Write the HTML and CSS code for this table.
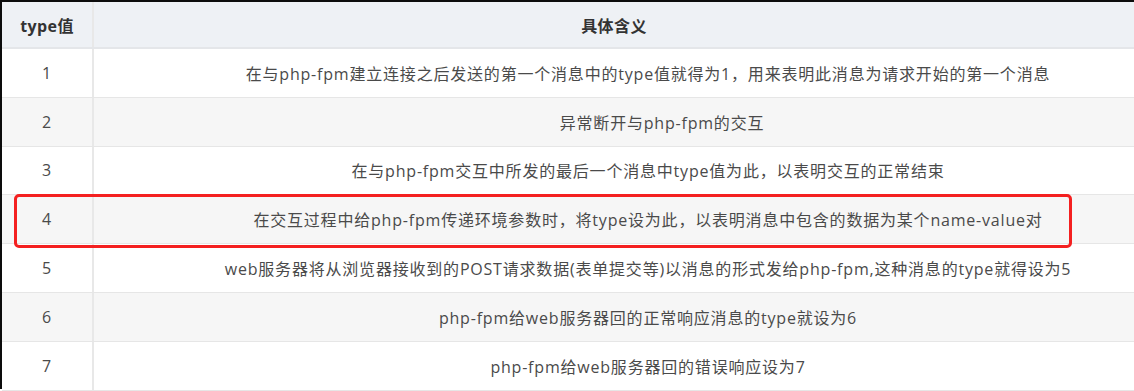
FILE: index.html
```html
<!DOCTYPE html>
<html lang="zh-CN">
<head>
<meta charset="utf-8">
<link rel="stylesheet" href="styles.css">
</head>
<body>
<div class="frame">
  <div class="table">
    <div class="row head">
      <div class="c1">type值</div>
      <div class="c2">具体含义</div>
    </div>
    <div class="row">
      <div class="c1">1</div>
      <div class="c2 off">在与php-fpm建立连接之后发送的第一个消息中的type值就得为1，用来表明此消息为请求开始的第一个消息</div>
    </div>
    <div class="row alt">
      <div class="c1">2</div>
      <div class="c2 off2">异常断开与php-fpm的交互</div>
    </div>
    <div class="row">
      <div class="c1">3</div>
      <div class="c2 off">在与php-fpm交互中所发的最后一个消息中type值为此，以表明交互的正常结束</div>
    </div>
    <div class="row alt">
      <div class="c1">4</div>
      <div class="c2 off">在交互过程中给php-fpm传递环境参数时，将type设为此，以表明消息中包含的数据为某个name-value对</div>
    </div>
    <div class="row">
      <div class="c1">5</div>
      <div class="c2 off">web服务器将从浏览器接收到的POST请求数据(表单提交等)以消息的形式发给php-fpm,这种消息的type就得设为5</div>
    </div>
    <div class="row alt">
      <div class="c1">6</div>
      <div class="c2 off">php-fpm给web服务器回的正常响应消息的type就设为6</div>
    </div>
    <div class="row">
      <div class="c1">7</div>
      <div class="c2 off">php-fpm给web服务器回的错误响应设为7</div>
    </div>
  </div>
  <div class="mark"></div>
</div>
</body>
</html>
```
FILE: styles.css
```css
html, body {
  margin: 0;
  padding: 0;
  background: #fff;
}
body {
  width: 1134px;
  height: 391px;
  overflow: hidden;
}
.frame {
  position: relative;
  border-top: 2px solid #0c0c0c;
  border-left: 2px solid #0c0c0c;
  height: 389px;
  box-sizing: border-box;
}
.table {
  font-family: "Open Sans", "Noto Sans CJK SC", sans-serif;
  font-size: 16px;
  letter-spacing: 0.8px;
  color: #4a4a4a;
}
.row {
  display: grid;
  grid-template-columns: 92px 1fr;
  height: 48.8px;
  border-bottom: 1px solid #e6e6e6;
  box-sizing: border-box;
}
.row.head {
  height: 47px;
  background: #eef1f5;
  font-weight: bold;
  color: #333;
  letter-spacing: 0.4px;
  border-bottom: 2px solid #e4e6e9;
}
.row.alt {
  background: #f6f6f6;
}
.c1, .c2 {
  display: flex;
  align-items: center;
  justify-content: center;
  white-space: nowrap;
}
.c1 {
  border-right: 2px solid #e8e8e8;
}
.c2.off {
  padding-left: 68px;
}
.c2.off2 {
  padding-left: 96px;
}
.mark {
  position: absolute;
  left: 12px;
  top: 192px;
  width: 1058px;
  height: 54px;
  border: 3px solid #f42020;
  border-radius: 5px;
  box-sizing: border-box;
}
```
